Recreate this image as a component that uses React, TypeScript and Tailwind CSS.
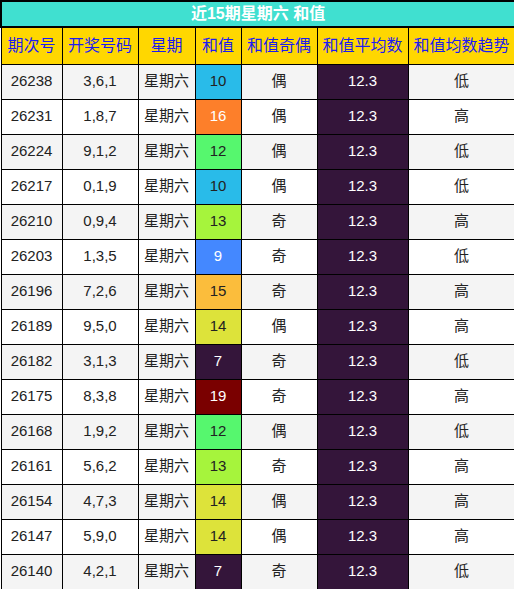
const rows = [
  { id: "26238", nums: "3,6,1", sum: 10, parity: "偶", trend: "低" },
  { id: "26231", nums: "1,8,7", sum: 16, parity: "偶", trend: "高" },
  { id: "26224", nums: "9,1,2", sum: 12, parity: "偶", trend: "低" },
  { id: "26217", nums: "0,1,9", sum: 10, parity: "偶", trend: "低" },
  { id: "26210", nums: "0,9,4", sum: 13, parity: "奇", trend: "高" },
  { id: "26203", nums: "1,3,5", sum: 9, parity: "奇", trend: "低" },
  { id: "26196", nums: "7,2,6", sum: 15, parity: "奇", trend: "高" },
  { id: "26189", nums: "9,5,0", sum: 14, parity: "偶", trend: "高" },
  { id: "26182", nums: "3,1,3", sum: 7, parity: "奇", trend: "低" },
  { id: "26175", nums: "8,3,8", sum: 19, parity: "奇", trend: "高" },
  { id: "26168", nums: "1,9,2", sum: 12, parity: "偶", trend: "低" },
  { id: "26161", nums: "5,6,2", sum: 13, parity: "奇", trend: "高" },
  { id: "26154", nums: "4,7,3", sum: 14, parity: "偶", trend: "高" },
  { id: "26147", nums: "5,9,0", sum: 14, parity: "偶", trend: "高" },
  { id: "26140", nums: "4,2,1", sum: 7, parity: "奇", trend: "低" },
];

const sumColor: Record<number, string> = {
  7: "bg-[#34153a] text-white",
  9: "bg-[#4488ff] text-white",
  10: "bg-[#29bbe9] text-[#222]",
  12: "bg-[#56f76e] text-[#222]",
  13: "bg-[#a6f43c] text-[#222]",
  14: "bg-[#dde33a] text-[#222]",
  15: "bg-[#fbbd3c] text-[#222]",
  16: "bg-[#fd7f2a] text-white",
  19: "bg-[#7a0000] text-white",
};

const headers = ["期次号", "开奖号码", "星期", "和值", "和值奇偶", "和值平均数", "和值均数趋势"];
const widths = ["w-[61px]", "w-[76px]", "w-[57px]", "w-[46px]", "w-[76px]", "w-[91px]", "w-[107px]"];

export default function App() {
  return (
    <div className="w-[514px] h-[589px] bg-white font-['Liberation_Sans','Noto_Sans_CJK_SC',sans-serif]">
      <table className="w-[514px] table-fixed border-collapse text-[15px] text-[#222]">
        <colgroup>
          {widths.map((w, i) => (
            <col key={i} className={w} />
          ))}
        </colgroup>
        <thead>
          <tr>
            <th
              colSpan={7}
              className="h-[26px] border-2 border-black bg-[#40e0d0] text-[16px] font-bold text-white"
            >
              近15期星期六 和值
            </th>
          </tr>
          <tr>
            {headers.map((h) => (
              <th
                key={h}
                className="h-[37px] border border-black bg-[#ffd700] text-[16px] font-normal text-[#1c1cf0]"
              >
                {h}
              </th>
            ))}
          </tr>
        </thead>
        <tbody>
          {rows.map((r, i) => (
            <tr key={r.id} className={i % 2 === 0 ? "bg-[#f4f4f4]" : "bg-white"}>
              <td className="h-[35px] border border-black text-center">{r.id}</td>
              <td className="border border-black text-center">{r.nums}</td>
              <td className="border border-black text-center">星期六</td>
              <td className={`border border-black text-center ${sumColor[r.sum]}`}>{r.sum}</td>
              <td className="border border-black text-center">{r.parity}</td>
              <td className="border border-black bg-[#34153a] text-center text-white">12.3</td>
              <td className="border border-black text-center">{r.trend}</td>
            </tr>
          ))}
        </tbody>
      </table>
    </div>
  );
}
